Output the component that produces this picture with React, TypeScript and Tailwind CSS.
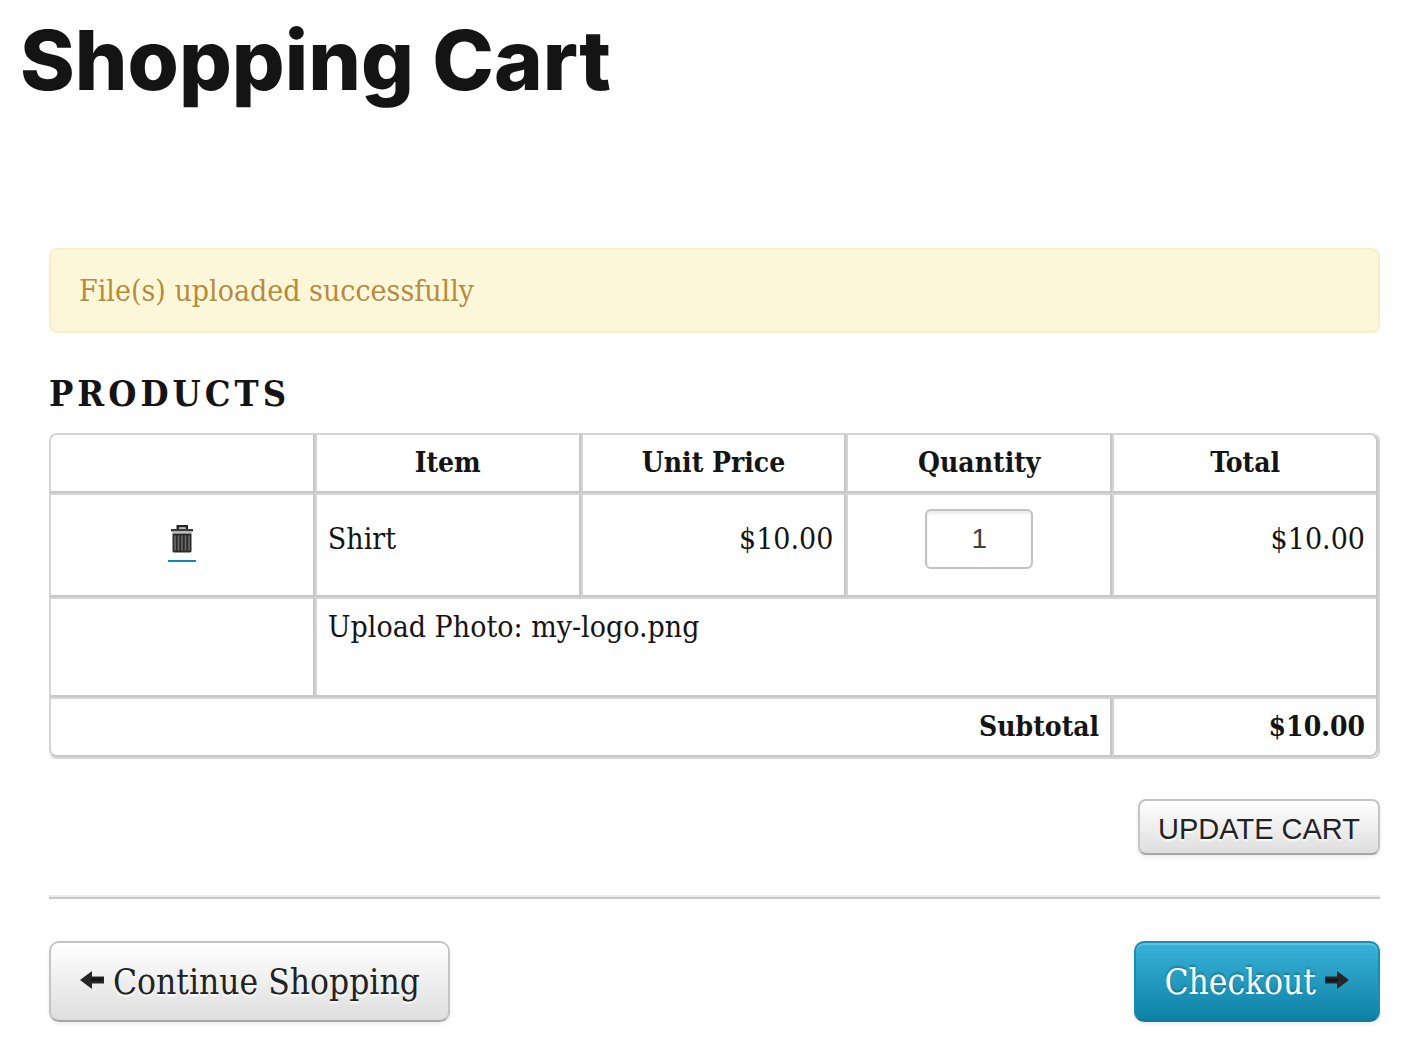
import { useState } from "react";

function TrashIcon() {
  return (
    <svg viewBox="0 0 24 28" className="h-7 w-6" aria-hidden="true">
      <path d="M6.500 5V0h11.500v5h-2.500V2.500H9V5z" fill="#262626" />
      <path d="M9 2.500h6.500V4H9z" fill="#bdbdbd" />
      <path d="M1 4h22v2.500H1z" fill="#3c3c3c" />
      <path d="M2.500 6.500h19v2h-19z" fill="#c2c2c2" />
      <path d="M2.500 8.500h19V26a1.500 1.500 0 0 1-1.500 1.500H4A1.500 1.500 0 0 1 2.500 26z" fill="#2b2b2b" />
      <path d="M5 10.500v15M8.500 10.500v15M12 10.500v15M15.500 10.500v15M19 10.500v15" stroke="#6c6c6c" strokeWidth="1.600" />
    </svg>
  );
}

function ArrowIcon({ right = false }: { right?: boolean }) {
  return (
    <svg viewBox="0 0 26 20" className={right ? "mb-1 h-5 w-[26px] rotate-180" : "mb-1 h-5 w-[26px]"} aria-hidden="true">
      <path d="M1 10 13 1v5.500h12v7H13V19z" fill="#262626" />
      <path d="M12 8h12v3H12z" fill="#171717" />
    </svg>
  );
}

const cell = "border-2 border-t-[#d4d4d4] border-l-[#d4d4d4] border-r-[#c7c7c7] border-b-[#c7c7c7] px-[11px]";
const lightButton =
  "border-2 border-[#c4c4c4] border-b-[#a6a6a6] bg-linear-to-b from-white to-[#dedede] text-[#222] shadow-[0_2px_4px_rgba(0,0,0,0.08)] [text-shadow:0_2px_2px_#fff]";

export default function App() {
  const [quantity, setQuantity] = useState("1");
  return (
    <main className="pb-10 pl-5 pr-9 font-['DejaVu_Serif_Condensed','DejaVu_Serif',serif] text-[30px] leading-10 text-[#141414]">
      <h1 className="pt-3 font-['Inter',sans-serif] text-[83px] font-extrabold leading-24">Shopping Cart</h1>

      <div className="mt-[140px] pl-[29px]">
        <div role="status" className="rounded-lg border-2 border-[#fbeccb] bg-[#fcf7d8] px-7 pt-[21px] pb-5 text-[#b98a38] [text-shadow:0_2px_0_rgba(255,255,255,0.5)]">
          File(s) uploaded successfully
        </div>

        <h2 className="mt-10 text-[36px] font-bold leading-10 tracking-[4px]">PRODUCTS</h2>

        <table className="mt-5 w-full table-fixed border-separate border-spacing-0 rounded-lg border-b-2 border-r-2 border-[#d4d4d4]">
          <thead>
            <tr className="h-[60px] text-[28px]">
              <th aria-label="Remove" className={`${cell} rounded-tl-lg`} />
              <th className={cell}>Item</th>
              <th className={cell}>Unit Price</th>
              <th className={cell}>Quantity</th>
              <th className={`${cell} rounded-tr-lg`}>Total</th>
            </tr>
          </thead>
          <tbody>
            <tr className="h-[104px] align-top">
              <td className={`${cell} pt-7 text-center`}>
                <a href="#remove" aria-label="Remove Shirt" className="inline-flex w-7 justify-center border-b-2 border-[#0f8bb0] pb-[7px]">
                  <TrashIcon />
                </a>
              </td>
              <td className={`${cell} pt-6`}>Shirt</td>
              <td className={`${cell} pt-6 text-right`}>$10.00</td>
              <td className={`${cell} pt-[14px] text-center`}>
                <input
                  type="text"
                  inputMode="numeric"
                  aria-label="Quantity"
                  value={quantity}
                  onChange={(e) => setQuantity(e.target.value)}
                  className="mx-auto block h-[60px] w-27 rounded-md border-2 border-[#c2c2c2] bg-white text-center font-['Liberation_Sans',sans-serif] text-[28px] text-[#404040] shadow-[inset_0_3px_3px_rgba(0,0,0,0.08)]"
                />
              </td>
              <td className={`${cell} pt-6 text-right`}>$10.00</td>
            </tr>
            <tr className="h-[100px] align-top">
              <td className={cell} />
              <td colSpan={4} className={`${cell} pt-2`}>Upload Photo: my-logo.png</td>
            </tr>
          </tbody>
          <tfoot>
            <tr className="h-[60px] text-[28px] font-bold">
              <th scope="row" colSpan={4} className={`${cell} rounded-bl-lg text-right`}>Subtotal</th>
              <td className={`${cell} rounded-br-lg text-right`}>$10.00</td>
            </tr>
          </tfoot>
        </table>

        <div className="mt-10 flex justify-end">
          <button type="button" className={`${lightButton} h-14 rounded-lg px-[18px] pt-1 font-['Liberation_Sans',sans-serif] text-[29px]`}>
            UPDATE CART
          </button>
        </div>

        <hr className="mt-10 border-t-2 border-b-2 border-t-[#ebebeb] border-b-[#c7c7c7]" />

        <nav className="mt-[42px] flex items-center justify-between text-[35px]">
          <a href="#shop" className={`${lightButton} flex h-[81px] items-center gap-2 rounded-[10px] px-7`}>
            <ArrowIcon />
            Continue Shopping
          </a>
          <a
            href="#checkout"
            className="flex h-[81px] items-center gap-2 rounded-[10px] border-2 border-[#1b8dae] border-b-[#187790] bg-linear-to-b from-[#37b2d8] to-[#0b82a6] px-7 text-white shadow-[inset_0_2px_0_rgba(255,255,255,0.2),0_2px_4px_rgba(0,0,0,0.08)] [text-shadow:0_-2px_2px_rgba(0,0,0,0.25)]"
          >
            Checkout
            <ArrowIcon right />
          </a>
        </nav>
      </div>
    </main>
  );
}
